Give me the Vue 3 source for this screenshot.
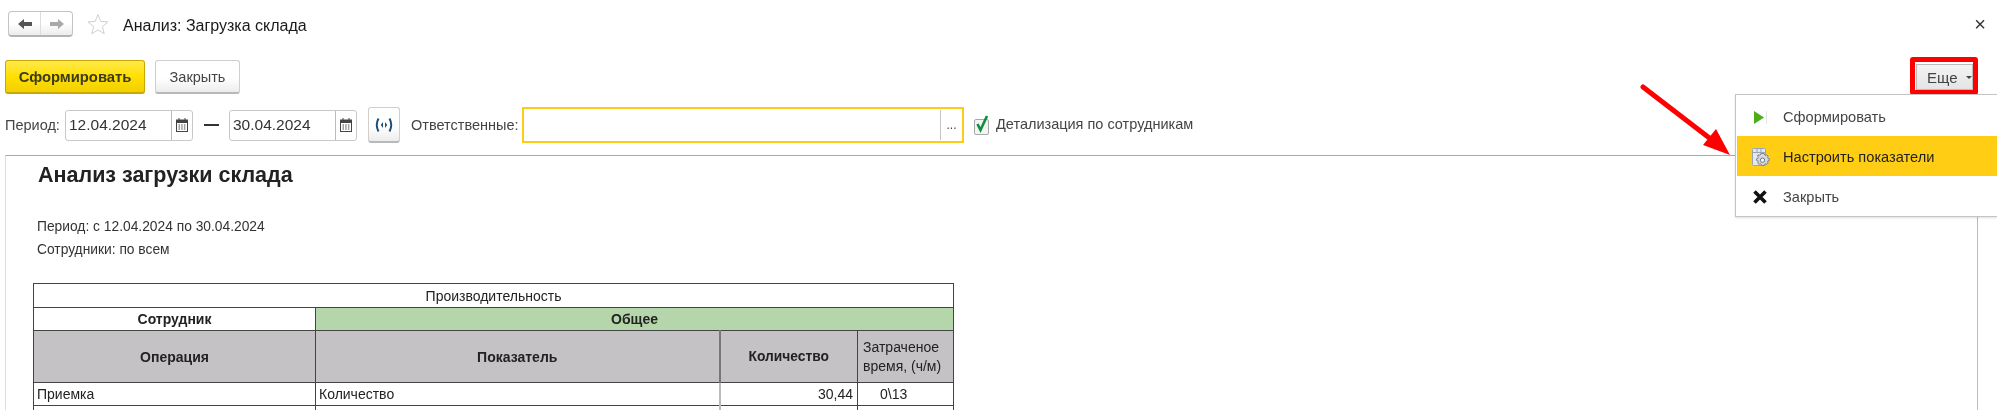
<script setup>
const rows = [
  { op: 'Приемка', ind: 'Количество', qty: '30,44', time: '0\\13' },
  { op: 'Приемка', ind: 'Количество', qty: '0', time: '0\\13' }
]
</script>

<template>
  <div class="page">
    <header class="titlebar">
      <div class="nav">
        <button class="nav-btn">
          <svg width="16" height="12" viewBox="0 0 16 12"><path d="M1 6 7 1v3h8v4H7v3z" fill="#555"/></svg>
        </button>
        <button class="nav-btn">
          <svg width="16" height="12" viewBox="0 0 16 12"><path d="M15 6 9 1v3H1v4h8v3z" fill="#a9a9a9"/></svg>
        </button>
      </div>
      <svg class="star" width="22" height="23" viewBox="0 0 22 23"><path d="M11 1.5l2.8 6.9 7.2.5-5.6 4.7 1.8 7.2L11 16.9 4.8 20.8l1.8-7.2L1 8.9l7.2-.5z" fill="#fff" stroke="#d0d0d4"/></svg>
      <h1 class="title">Анализ: Загрузка склада</h1>
      <span class="close-x">×</span>
    </header>

    <div class="commands">
      <button class="btn primary">Сформировать</button>
      <button class="btn close-btn">Закрыть</button>
      <button class="btn more">Еще<i class="caret"></i></button>
    </div>

    <div class="filters">
      <span class="lbl period-lbl">Период:</span>
      <div class="date"><span class="val">12.04.2024</span><span class="cal"><svg width="12" height="14" viewBox="0 0 12 14"><path d="M3 0v2M9 0v2" stroke="#444"/><rect x=".5" y="2" width="11" height="11.5" fill="none" stroke="#444"/><path d="M1 2h10v3H1z" fill="#444"/><path d="M2.5 7h7M2.5 9h7M2.5 11h7" stroke="#444" stroke-dasharray="1.5 1.2"/></svg></span></div>
      <span class="dash"></span>
      <div class="date second"><span class="val">30.04.2024</span><span class="cal"><svg width="12" height="14" viewBox="0 0 12 14"><path d="M3 0v2M9 0v2" stroke="#444"/><rect x=".5" y="2" width="11" height="11.5" fill="none" stroke="#444"/><path d="M1 2h10v3H1z" fill="#444"/><path d="M2.5 7h7M2.5 9h7M2.5 11h7" stroke="#444" stroke-dasharray="1.5 1.2"/></svg></span></div>
      <button class="btn period">
        <svg width="20" height="16" viewBox="0 0 20 16"><path d="M4.5 1.5Q1 8 4.5 14.5M15.5 1.5Q19 8 15.5 14.5" fill="none" stroke="#1d4f7c" stroke-width="2"/><path d="M9 5 6.8 8 9 11zM11 5l2.2 3L11 11z" fill="#1d4f7c"/></svg>
      </button>
      <span class="lbl resp">Ответственные:</span>
      <div class="resp-input"><span class="pick">...</span></div>
      <label class="check">
        <svg width="16" height="20" viewBox="0 0 16 20"><rect x=".5" y="4.5" width="14" height="15" rx="1.5" fill="#f4f4f4" stroke="#a8a8a8"/><path d="M3.5 9 6.5 15 13 1" fill="none" stroke="#0d8f3c" stroke-width="2.6"/></svg>
        <span>Детализация по сотрудникам</span>
      </label>
    </div>

    <main class="report">
      <h2 class="rep-title">Анализ загрузки склада</h2>
      <p class="meta first">Период: с 12.04.2024 по 30.04.2024</p>
      <p class="meta">Сотрудники: по всем</p>
      <table class="grid">
        <colgroup><col class="c1"><col class="c2"><col class="c3"><col class="c4"></colgroup>
        <tbody>
          <tr class="r-top"><td colspan="4" class="ctr">Производительность</td></tr>
          <tr class="r-cap"><th>Сотрудник</th><th colspan="3" class="green">Общее</th></tr>
          <tr class="r-head"><th class="grey">Операция</th><th class="grey">Показатель</th><th class="grey qty-h">Количество</th><th class="grey time-h">Затраченое<br>время, (ч/м)</th></tr>
          <tr v-for="(r, i) in rows" :key="i" class="r-data">
            <td>{{ r.op }}</td><td>{{ r.ind }}</td><td class="num">{{ r.qty }}</td><td class="tm">{{ r.time }}</td>
          </tr>
        </tbody>
      </table>
    </main>

    <div class="highlight"></div>
    <svg class="arrow" width="100" height="80" viewBox="0 0 100 80"><path d="M3 3 72 56" stroke="#f00" stroke-width="5" stroke-linecap="round"/><path d="M90 71 63 61 76 45z" fill="#f00"/></svg>

    <nav class="menu">
      <div class="item">
        <span class="ico"><svg width="16" height="15" viewBox="0 0 16 15"><path d="M2 1 12 7.5 2 14z" fill="#4caf1a"/><path d="M14.5 1v13" stroke="#dfe8df"/></svg></span>
        Сформировать
      </div>
      <div class="item active">
        <span class="ico"><svg width="18" height="20" viewBox="0 0 18 20"><rect x=".5" y="1.5" width="13" height="17" rx="1" fill="#e3e7ee" stroke="#9aa3b2"/><path d="M.5 5.5h13M5 1.5v4M9 1.5v4" stroke="#9aa3b2"/><path d="M11 6.4l1.3.3.3 1.3 1.2.5 1.1-.7 1.3 1.3-.7 1.1.5 1.2 1.3.3v1.8l-1.3.3-.5 1.2.7 1.1-1.3 1.3-1.1-.7-1.2.5-.3 1.3H9.6l-.3-1.3-1.2-.5-1.1.7-1.3-1.3.7-1.1-.5-1.2-1.3-.3v-1.8l1.3-.3.5-1.2-.7-1.1L6 7.7l1.1.7 1.2-.5.3-1.3z" fill="#d7d9dd" stroke="#7d8590"/><circle cx="10.5" cy="13.2" r="2.2" fill="#f4f4f4" stroke="#6f7783"/></svg></span>
        Настроить показатели
      </div>
      <div class="item">
        <span class="ico"><svg width="16" height="16" viewBox="0 0 16 16"><path d="M2.5 2.5 13.5 13.5M13.5 2.5 2.5 13.5" stroke="#111" stroke-width="3.6"/></svg></span>
        Закрыть
      </div>
    </nav>
  </div>
</template>

<style>
html, body { margin: 0; overflow: hidden; background: #fff; }
</style>

<style scoped>
.page {
  position: relative;
  width: 1997px;
  height: 410px;
  overflow: hidden;
  background: #fff;
  color: #333;
  font-family: "Liberation Sans", Arial, sans-serif;
  font-size: 14px;
  display: flex;
  flex-direction: column;
  filter: blur(.3px);
}
button { font-family: inherit; margin: 0; }
.titlebar { display: flex; align-items: center; height: 26px; margin-top: 11px; padding-left: 8px; }
.nav { display: flex; width: 65px; height: 26px; box-sizing: border-box; border: 1px solid #c4c4c4; border-bottom: 2px solid #b4b4b4; border-radius: 4px; background: linear-gradient(#fff 50%, #ececec); }
.nav-btn { flex: 1; border: 0; background: none; padding: 0; display: flex; align-items: center; justify-content: center; }
.nav-btn + .nav-btn { border-left: 1px solid #ddd; }
.star { margin-left: 14px; }
.title { margin: 4px 0 0 14px; font-size: 16px; font-weight: 400; color: #1a1a1a; flex: 1; }
.close-x { margin-right: 11px; font-size: 20px; color: #333; }

.commands { display: flex; align-items: center; gap: 10px; height: 34px; margin-top: 23px; padding: 0 24px 0 5px; }
.btn { height: 34px; box-sizing: border-box; border: 1px solid #cfcfcf; border-bottom: 2px solid #b8b8b8; border-radius: 3px; background: linear-gradient(#fff 55%, #ececec); font-size: 15px; color: #444; padding: 0; }
.primary { width: 140px; font-size: 14.8px; font-weight: 700; border-color: #c9a800; background: linear-gradient(#ffe94d, #ffe000 50%, #f2cf00); color: #3b3b1e; }
.close-btn { width: 85px; font-size: 14.5px; }
.more { margin-left: auto; width: 57px; height: 26px; font-size: 15px; border: 1px solid #bbb; background: linear-gradient(#f4f4f4, #e4e4e4); border-radius: 0; display: flex; align-items: center; padding-left: 10px; }
.caret { margin-left: 8px; border: 3px solid transparent; border-top: 3px solid #444; margin-top: 4px; }

.filters { display: flex; align-items: center; height: 36px; margin-top: 13px; padding-left: 5px; }
.lbl { font-size: 14.5px; color: #444; }
.period-lbl { width: 54px; }
.date { margin-left: 6px; width: 128px; height: 31px; box-sizing: border-box; border: 1px solid #c8c8c8; border-radius: 3px; display: flex; align-items: center; font-size: 15.5px; color: #333; }
.date.second { margin-left: 0; }
.val { flex: 1; padding-left: 3px; }
.cal { width: 20px; height: 100%; border-left: 1px solid #bbb; display: flex; align-items: center; justify-content: center; }
.dash { width: 15px; height: 2px; background: #333; margin: 0 10px 0 11px; }
.period { width: 32px; height: 36px; margin-left: 11px; display: flex; align-items: center; justify-content: center; }
.resp { margin-left: 11px; width: 111px; }
.resp-input { width: 442px; height: 36px; box-sizing: border-box; border: 2px solid #ffcc14; display: flex; justify-content: flex-end; align-items: stretch; padding: 1px 0; }
.pick { width: 21px; border-left: 1px solid #c4c4c4; font-size: 12px; text-align: center; line-height: 30px; color: #444; }
.check { display: flex; align-items: flex-end; gap: 6px; margin-left: 10px; font-size: 14.5px; color: #444; height: 20px; }
.check span { line-height: 20px; position: relative; top: -1px; }

.report { flex: 1; margin: 12px 19px 0 5px; box-sizing: border-box; border-top: 1px solid #aaa; border-left: 1px solid #ddd; border-right: 1px solid #bbb; padding: 0 0 0 27px; }
.rep-title { margin: 4px 0 0 5px; font-size: 21.5px; line-height: 30px; font-weight: 700; color: #222; }
.meta { margin: 0 0 0 4px; font-size: 13.8px; line-height: 23px; color: #333; }
.meta.first { margin-top: 25px; }
.grid { margin-top: 22px; width: 920px; table-layout: fixed; border-collapse: collapse; font-size: 14px; color: #222; }
.c1 { width: 282px; } .c2 { width: 404px; } .c3 { width: 138px; } .c4 { width: 96px; }
.grid td, .grid th { border: 1px solid #444; padding: 0 3px; overflow: hidden; white-space: nowrap; }
.r-top { height: 24px; } .r-cap { height: 23px; } .r-head { height: 52px; } .r-data { height: 23px; }
.ctr { text-align: center; }
.green { background: #b5d6aa; }
.grey { background: #c4c2c5; }
.grid .qty-h { font-size: 13.8px; border-left: 2px solid #777; }
.grid .time-h { font-weight: 400; font-size: 14px; text-align: left; padding-left: 5px; line-height: 19px; }
.grid .num { text-align: right; padding-right: 4px; border-left: 2px solid #bbb; }
.grid .tm { text-align: left; padding-left: 22px; }

.highlight { position: absolute; left: 1910px; top: 57px; width: 68px; height: 38px; box-sizing: border-box; border: 5px solid #f00; border-radius: 3px; }
.arrow { position: absolute; left: 1640px; top: 84px; }
.menu { position: absolute; left: 1735px; top: 94px; width: 262px; height: 123px; box-sizing: border-box; background: #fff; border: 1px solid #c4c4c4; border-right: 0; padding: 1px 0 0 1px; box-shadow: 0 1px 2px rgba(0,0,0,.12); }
.item { height: 40px; box-sizing: border-box; padding-top: 2px; display: flex; align-items: center; font-size: 14.6px; color: #444; }
.item.active { background: #ffce14; color: #222; }
.ico { width: 46px; padding-left: 15px; box-sizing: border-box; display: flex; align-items: center; }
</style>
